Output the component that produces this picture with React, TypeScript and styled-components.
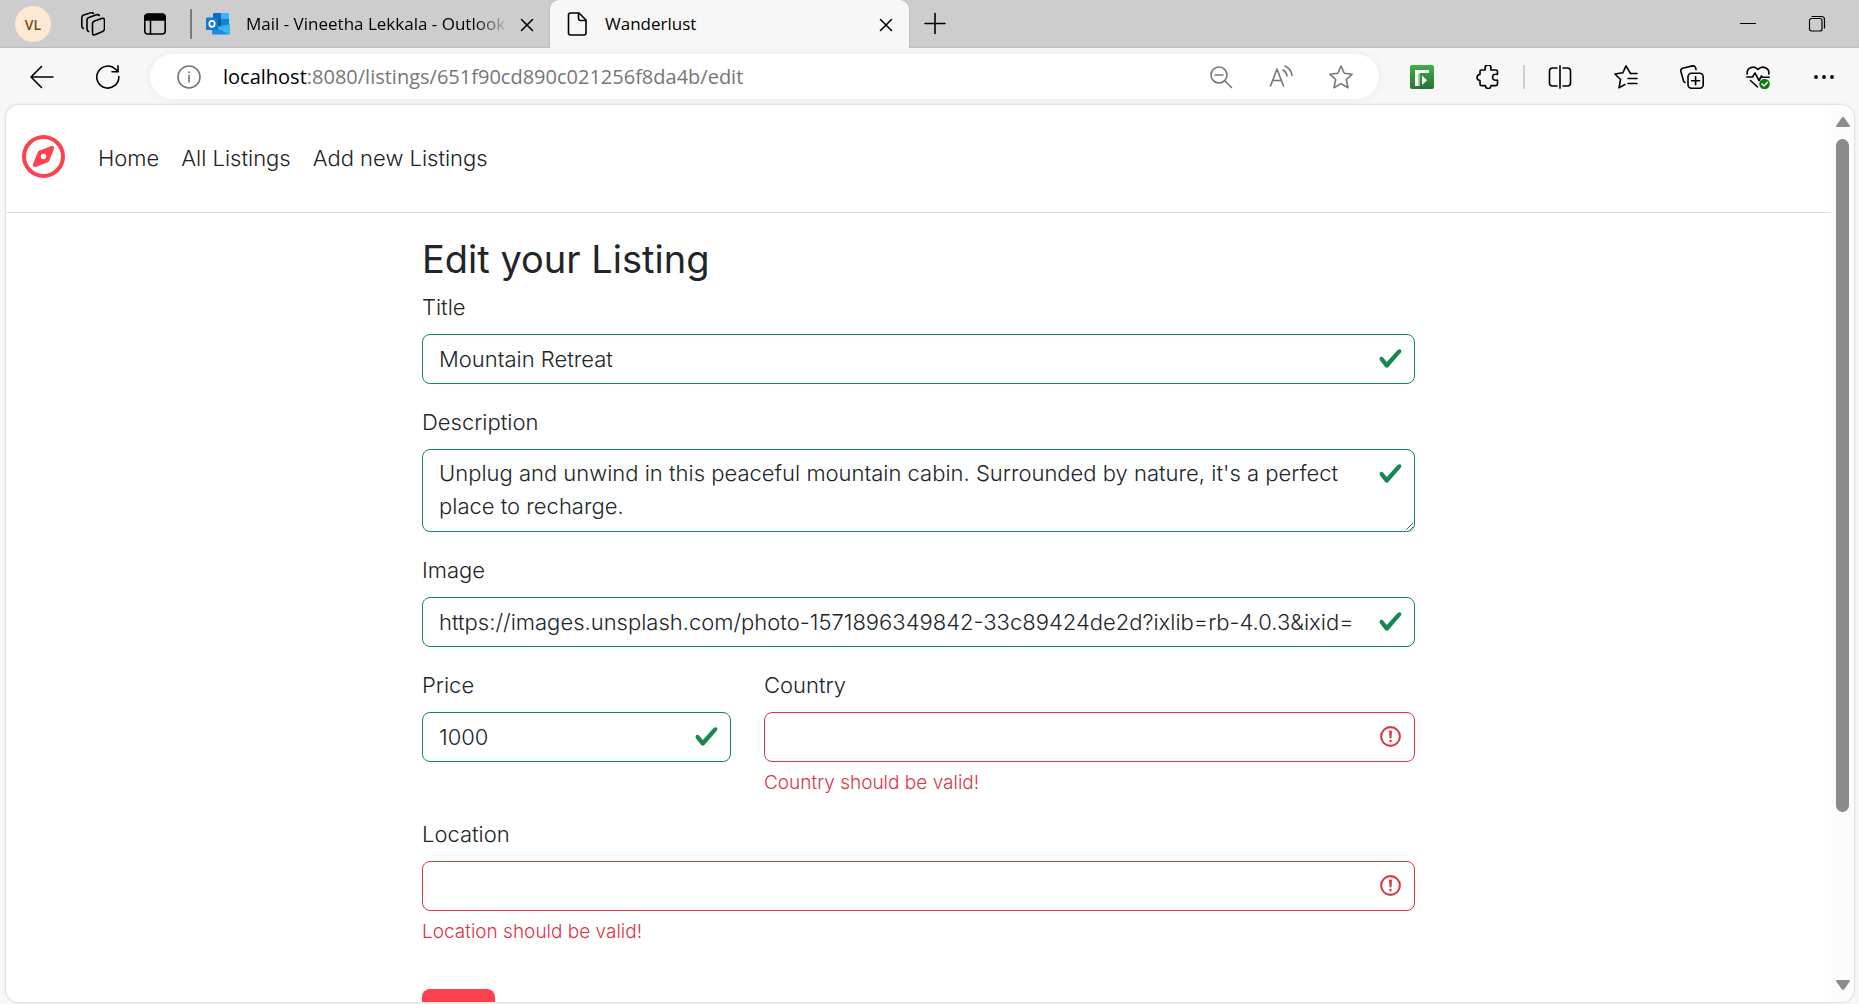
import React, { useState } from "react";
import styled, { createGlobalStyle, css } from "styled-components";
import { FaRegCompass } from "react-icons/fa6";

const GlobalStyle = createGlobalStyle`
  *, *::before, *::after { box-sizing: border-box; }
  body { margin: 0; background: #f7f7f7; }
  button, input, textarea { font: inherit; color: inherit; }
`;

const uiFont = `"Open Sans", "Noto Sans", sans-serif`;
const siteFont = `Inter, "Open Sans", sans-serif`;

/* ---------- browser frame ---------- */

const Window = styled.div`
  display: flex;
  flex-direction: column;
  height: 100vh;
  overflow: hidden;
  background: #f7f7f7;
  font-family: ${uiFont};
  color: #000;
`;

const TabStrip = styled.div`
  display: flex;
  flex: none;
  height: 48px;
  padding-right: 8px;
  background: #cdcdcd;
  box-shadow: inset 0 -1px 1px #bcbcbc;
`;

const IconButton = styled.button<{ $w?: number }>`
  display: flex;
  flex: none;
  align-items: center;
  justify-content: center;
  width: ${(p) => p.$w ?? 66}px;
  height: 100%;
  padding: 0;
  border: 0;
  background: none;
  color: inherit;
`;

const Avatar = styled.span`
  display: flex;
  align-items: center;
  justify-content: center;
  width: 36px;
  height: 36px;
  border-radius: 50%;
  background: #fde8d3;
  color: #7d4a12;
  font-size: 14px;
  font-weight: 600;
`;

const StripDivider = styled.span`
  align-self: center;
  width: 2px;
  height: 30px;
  background: #7c7c7c;
`;

const Tab = styled.div<{ $active?: boolean }>`
  position: relative;
  display: flex;
  align-items: center;
  width: ${(p) => (p.$active ? 359 : 358)}px;
  height: 48px;
  padding: 0 6px 0 ${(p) => (p.$active ? 15 : 14)}px;
  ${(p) =>
    p.$active &&
    css`
      border-radius: 9px 9px 0 0;
      background: #f7f7f7;
      box-shadow: 0 0 2px #a5a5a5;
      clip-path: inset(0 -2px 0 -2px);
    `}
`;

const TabTitle = styled.span<{ $fade?: boolean }>`
  flex: 1;
  min-width: 0;
  margin-left: 16px;
  overflow: hidden;
  white-space: nowrap;
  font-size: 17px;
  line-height: 24px;
  ${(p) =>
    p.$fade &&
    css`
      mask-image: linear-gradient(to right, #000 calc(100% - 36px), transparent);
    `}
`;

const Spacer = styled.span`
  flex: 1;
`;

const Toolbar = styled.div`
  display: flex;
  flex: none;
  align-items: center;
  height: 57px;
  padding: 0 2px 0 9px;
`;

const AddressBar = styled.div`
  display: flex;
  flex: 1;
  align-items: center;
  min-width: 0;
  height: 45px;
  margin: 0 10px 0 9px;
  padding: 0 8px 0 14px;
  border-radius: 23px;
  background: #fff;
  box-shadow: 0 0 6px #e6e6e6;
  color: #767676;
`;

const Url = styled.div`
  flex: 1;
  min-width: 0;
  margin-left: 9px;
  overflow: hidden;
  white-space: nowrap;
  font-size: 20px;
  line-height: 28px;

  b {
    font-weight: 400;
    color: #000;
  }
`;

const ToolDivider = styled.span`
  width: 2px;
  height: 24px;
  margin: 0 2px;
  background: #cfcfcf;
`;

const Svg = styled.svg`
  display: block;
  flex: none;
`;

const Icon = ({ children }: { children: React.ReactNode }) => (
  <Svg
    width={24}
    height={24}
    viewBox="0 0 24 24"
    fill="none"
    stroke="currentColor"
    strokeWidth={1.6}
    strokeLinecap="round"
    strokeLinejoin="round"
    aria-hidden
  >
    {children}
  </Svg>
);

const CloseIcon = () => (
  <Icon>
    <path d="M6.500 7.500l11 11M17.500 7.500l-11 11" />
  </Icon>
);

const OutlookLogo = () => (
  <Svg width={24} height={24} viewBox="0 0 24 24" aria-hidden>
    <rect x="7" y="1" width="16" height="15" rx="1.4" fill="#28a8ea" />
    <path d="M7 2.400A1.400 1.400 0 0 1 8.400 1H15v6H7z" fill="#0f6cbd" />
    <path d="M15 1h6.600A1.400 1.400 0 0 1 23 2.400V7h-8z" fill="#39b5f2" />
    <path d="M7 7h8v7H7z" fill="#0a5ea8" />
    <path d="M15 7h8v6h-8z" fill="#1180d8" />
    <path d="M6 12l9 6 9-6.500V21a1.500 1.500 0 0 1-1.500 1.500h-15A1.500 1.500 0 0 1 6 21z" fill="#1490df" />
    <path d="M24 11.500V21a1.500 1.500 0 0 1-1.500 1.500L13 16.800z" fill="#35b8f1" />
    <rect x="0" y="5.500" width="12" height="12.500" rx="1.200" fill="#0f78d4" />
    <ellipse cx="6" cy="11.800" rx="2.700" ry="3" fill="none" stroke="#fff" strokeWidth="1.800" />
  </Svg>
);

const ExtensionLogo = () => (
  <Svg width={24} height={24} viewBox="0 0 24 24" aria-hidden>
    <defs>
      <linearGradient id="ext" x1="0" y1="0" x2="0" y2="1">
        <stop offset="0" stopColor="#3fae49" />
        <stop offset="1" stopColor="#2a7237" />
      </linearGradient>
    </defs>
    <rect width="24" height="24" rx="2" fill="url(#ext)" />
    <path d="M5 5h14v3H9.500v13H5z" fill="#fff" />
    <path d="M8 9h1.500v12H8z" fill="#9ccfa2" />
    <path d="M12 10.500l5 4.800-5 4.800z" fill="#fff" />
  </Svg>
);

/* ---------- site ---------- */

const Viewport = styled.div`
  display: flex;
  flex: 1;
  min-height: 0;
  margin: 0 5px 2px 6px;
  overflow: hidden;
  border-radius: 13px;
  background: #fff;
  box-shadow: 0 0 2px 1px #dcdcdc;
`;

const Page = styled.div`
  flex: 1;
  min-width: 0;
  overflow: hidden;
  font-family: ${siteFont};
  font-size: 22px;
  font-weight: 300;
  line-height: 33px;
  color: #212529;
`;

const Nav = styled.nav`
  display: flex;
  align-items: center;
  height: 108px;
  padding: 0 16px 4px;
  border-bottom: 1px solid #dee2e6;
`;

const Brand = styled.a`
  display: flex;
  margin-right: 22px;
  color: #fe424d;
`;

const NavLink = styled.a`
  padding: 4px 11px 0;
  color: #222;
  text-decoration: none;
`;

const Main = styled.main`
  max-width: 993px;
  margin: 0 auto;
  padding-top: 23px;
`;

const Heading = styled.h1`
  margin: 0 0 9px;
  font-size: 38px;
  font-weight: 400;
  line-height: 46px;
`;

const Form = styled.form`
  display: flex;
  flex-direction: column;
  align-items: flex-start;
  gap: 22px;
`;

const Field = styled.div`
  width: 100%;
`;

const Row = styled.div`
  display: grid;
  grid-template-columns: repeat(3, 1fr);
  column-gap: 33px;
  width: 100%;
`;

const WideCell = styled.div`
  grid-column: span 2;
`;

const Label = styled.label`
  display: block;
  margin-bottom: 10px;
`;

const Control = styled.div`
  position: relative;
  display: flex;
`;

const boxed = css<{ $valid: boolean }>`
  display: block;
  width: 100%;
  padding: 7px 47px 7px 16px;
  border: 1px solid ${(p) => (p.$valid ? "#198754" : "#dc3545")};
  border-radius: 8px;
  outline: 0;
  background: #fff;
  line-height: 33px;
`;

const Input = styled.input<{ $valid: boolean }>`
  ${boxed}
  height: 50px;
`;

const TextArea = styled.textarea<{ $valid: boolean }>`
  ${boxed}
  height: 83px;
  overflow: hidden;
  resize: vertical;
`;

const Mark = styled(Svg)`
  position: absolute;
  top: 12px;
  right: 12px;
  pointer-events: none;
`;

const Feedback = styled.p`
  margin: 8px 0 0;
  font-size: 19px;
  line-height: 26px;
  color: #dc3545;
`;

const Submit = styled.button`
  min-width: 73px;
  height: 50px;
  margin-top: 22px;
  border: 0;
  border-radius: 8px;
  background: #fe424d;
`;

const ValidMark = () => (
  <Mark width={25} height={25} viewBox="0 0 8 8" aria-hidden>
    <path
      fill="#198754"
      d="M2.3 6.73.6 4.53c-.4-1.04.46-1.4 1.1-.8l1.1 1.4 3.4-3.8c.6-.63 1.6-.27 1.2.7l-4 4.6c-.43.5-.8.4-1.1.1z"
    />
  </Mark>
);

const InvalidMark = () => (
  <Mark width={25} height={25} viewBox="0 0 12 12" fill="none" stroke="#dc3545" aria-hidden>
    <circle cx="6" cy="6" r="4.5" />
    <path strokeLinejoin="round" d="M5.8 3.6h.4L6 6.5z" />
    <circle cx="6" cy="8.2" r=".6" fill="#dc3545" stroke="none" />
  </Mark>
);

type TextFieldProps = { id: string; label: string; initial: string; error?: string; multiline?: boolean };

const TextField = ({ id, label, initial, error, multiline }: TextFieldProps) => {
  const [value, setValue] = useState(initial);
  const valid = value.trim() !== "";
  return (
    <Field>
      <Label htmlFor={id}>{label}</Label>
      <Control>
        {multiline ? (
          <TextArea id={id} $valid={valid} value={value} onChange={(e) => setValue(e.target.value)} />
        ) : (
          <Input id={id} $valid={valid} value={value} onChange={(e) => setValue(e.target.value)} />
        )}
        {valid ? <ValidMark /> : <InvalidMark />}
      </Control>
      {!valid && error && <Feedback>{error}</Feedback>}
    </Field>
  );
};

const ScrollTrack = styled.div`
  display: flex;
  flex: none;
  flex-direction: column;
  align-items: center;
  width: 23px;
  padding: 12px 0;
  background: #fcfcfc;
  color: #8b8b8b;
`;

const ScrollRail = styled.div`
  display: grid;
  flex: 1;
  grid-template-rows: 13fr 3fr;
  margin: 12px 0 13px;
`;

const ScrollThumb = styled.div`
  width: 13px;
  border-radius: 7px;
  background: #8b8b8b;
`;

const ScrollArrow = ({ d }: { d: string }) => (
  <Svg width={14} height={10} viewBox="0 0 14 10" aria-hidden>
    <path fill="currentColor" d={d} />
  </Svg>
);

export default function App() {
  return (
    <>
      <GlobalStyle />
      <Window>
        <TabStrip>
          <IconButton aria-label="Profile"><Avatar>VL</Avatar></IconButton>
          <IconButton aria-label="Workspaces" $w={54}>
            <Icon>
              <path d="M13 9.200l7.500-2.800q3-.8 3 2v8.200q0 2-1.800 2.800l-7.200 3.200q-3 1-3-1.600V11.500q0-1.600 1.500-2.300z" />
              <path d="M7.500 19.500q-1.500-.8-1.500-2.500V8q0-1.800 1.800-2.600l7.700-2.600q2-.5 2.800.7" />
              <path d="M2.300 16.500Q.8 15.700.8 14V5.500q0-1.800 1.800-2.500L10 .8q1.800-.3 2.500.7" />
            </Icon>
          </IconButton>
          <IconButton aria-label="Tab actions" $w={70}>
            <Icon>
              <rect x="1.800" y="2.500" width="20.400" height="19.500" rx="3" />
              <path d="M7.500 8v14" />
              <path d="M2 8V5q0-3 3-3h14q3 0 3 3v3z" fill="currentColor" />
            </Icon>
          </IconButton>
          <StripDivider />
          <Tab>
            <OutlookLogo />
            <TabTitle $fade>Mail - Vineetha Lekkala - Outlook</TabTitle>
            <IconButton aria-label="Close Mail tab" $w={34}><CloseIcon /></IconButton>
          </Tab>
          <Tab $active>
            <Icon>
              <path d="M5.500 1h8.500l7 7v13q0 2-2 2H5.500q-2 0-2-2V3q0-2 2-2z" />
              <path d="M13.500 1v5.500q0 2 2 2H21" />
            </Icon>
            <TabTitle>Wanderlust</TabTitle>
            <IconButton aria-label="Close Wanderlust tab" $w={34}><CloseIcon /></IconButton>
          </Tab>
          <IconButton aria-label="New tab" $w={52}>
            <Icon><path d="M12 1.500v20M2 11.500h20" /></Icon>
          </IconButton>
          <Spacer />
          <IconButton aria-label="Minimize" $w={69}>
            <Icon><path d="M4.500 11.500h15" strokeWidth="1.200" /></Icon>
          </IconButton>
          <IconButton aria-label="Restore" $w={69}>
            <Icon>
              <rect x="4.500" y="6.500" width="12.500" height="12.500" rx="2" strokeWidth="1.200" />
              <path d="M7 4.500h9.500q3 0 3 3V16" strokeWidth="1.200" />
            </Icon>
          </IconButton>
        </TabStrip>

        <Toolbar>
          <IconButton aria-label="Back">
            <Icon><path d="M11.500 1.500L1 12l10.500 10.500M1 12h22" /></Icon>
          </IconButton>
          <IconButton aria-label="Refresh">
            <Icon>
              <path d="M22.800 11.500A11 11 0 1 1 19.500 4.200L22 6.500" />
              <path d="M22 .8v6h-6" />
            </Icon>
          </IconButton>
          <AddressBar>
            <IconButton aria-label="Site information" $w={50}>
              <Icon>
                <circle cx="12" cy="12" r="11" />
                <path d="M12 10.500v6.500" />
                <circle cx="12" cy="7.300" r="1" fill="currentColor" stroke="none" />
              </Icon>
            </IconButton>
            <Url><b>localhost</b>:8080/listings/651f90cd890c021256f8da4b/edit</Url>
            <IconButton aria-label="Zoom out" $w={60}>
              <Icon>
                <circle cx="10" cy="10" r="8" />
                <path d="M6 10h8M16 16l6.500 6.500" />
              </Icon>
            </IconButton>
            <IconButton aria-label="Read aloud" $w={60}>
              <Icon>
                <path d="M1.500 21L8 4l6.500 17M3.800 15.500h8.600M14 5q3.500 2 4 6M16 1q6 2.500 7 9.500" />
              </Icon>
            </IconButton>
            <IconButton aria-label="Add to favorites" $w={60}>
              <Icon>
                <path d="M12 1l3.200 7.300 8 .9-5.900 5.300 1.700 8.200-7-4.100-7 4.100 1.700-8.200L.8 9.200l8-.9z" />
              </Icon>
            </IconButton>
          </AddressBar>
          <IconButton aria-label="Extension"><ExtensionLogo /></IconButton>
          <IconButton aria-label="Extensions">
            <Icon>
              <path d="M5 5h4q.3-1.200 0-2a3 3 0 0 1 6 0q-.3.800 0 2h5q1.500 0 1.500 1.500V9.500q-1.200-.3-2-.2a3 3 0 0 0 0 6q.8.100 2-.2v4q0 1.500-1.500 1.500h-5q-.2 3-2.800 3t-2.800-3H5.500Q4 20.600 4 19.200V15.500Q1 15 1 12.400T4 9.500V6.500Q4 5 5 5z" />
            </Icon>
          </IconButton>
          <ToolDivider />
          <IconButton aria-label="Split screen">
            <Icon>
              <path d="M9 3H4.500q-3 0-3 3v12q0 3 3 3H9M15 3h4.500q3 0 3 3v12q0 3-3 3H15M12 .8v22.400" />
            </Icon>
          </IconButton>
          <IconButton aria-label="Favorites">
            <Icon>
              <path d="M23 8.500h-6.500L12 .9 8.800 7.800.9 9l5.600 5.500L5 22.800l6-3.300M14 13.500h9M14 18.500h9" />
            </Icon>
          </IconButton>
          <IconButton aria-label="Collections">
            <Icon>
              <rect x="8" y="8.300" width="15.200" height="15" rx="3.500" />
              <path d="M15.600 11.800v8M11.600 15.800h8" />
              <path d="M5 17.500q-1.200-.5-1.600-2L.9 6.500q-.5-2.400 1.600-3.200L12.500.9q2.300-.4 3 1.700l.5 2" />
            </Icon>
          </IconButton>
          <IconButton aria-label="Browser essentials">
            <Icon>
              <path d="M1.200 9C.3 3.500 7.500-.500 12 4.500 16.500-.500 23.700 3.500 22.800 9M.8 12h5.700l2.500-4 4 7.500 2.500-4.500 1 1.300h6.700M4.500 15.500l7 6.500" />
              <circle cx="18.500" cy="19" r="5.300" fill="#107c10" stroke="none" />
              <path d="M16 19l2 2 3.300-3.600" stroke="#fff" strokeWidth="1.500" />
            </Icon>
          </IconButton>
          <IconButton aria-label="Settings and more">
            <Icon>
              <g fill="currentColor" stroke="none">
                <circle cx="4" cy="12" r="1.900" />
                <circle cx="12" cy="12" r="1.900" />
                <circle cx="20" cy="12" r="1.900" />
              </g>
            </Icon>
          </IconButton>
        </Toolbar>

        <Viewport>
          <Page>
            <Nav>
              <Brand href="#" aria-label="Wanderlust"><FaRegCompass size={43} /></Brand>
              <NavLink href="#">Home</NavLink>
              <NavLink href="#">All Listings</NavLink>
              <NavLink href="#">Add new Listings</NavLink>
            </Nav>
            <Main>
              <Heading>Edit your Listing</Heading>
              <Form onSubmit={(e) => e.preventDefault()}>
                <TextField id="title" label="Title" initial="Mountain Retreat" />
                <TextField
                  id="description"
                  label="Description"
                  multiline
                  initial="Unplug and unwind in this peaceful mountain cabin. Surrounded by nature, it's a perfect place to recharge."
                />
                <TextField
                  id="image"
                  label="Image"
                  initial="https://images.unsplash.com/photo-1571896349842-33c89424de2d?ixlib=rb-4.0.3&ixid="
                />
                <Row>
                  <TextField id="price" label="Price" initial="1000" />
                  <WideCell>
                    <TextField id="country" label="Country" initial="" error="Country should be valid!" />
                  </WideCell>
                </Row>
                <TextField id="location" label="Location" initial="" error="Location should be valid!" />
                <Submit type="submit" aria-label="Edit" />
              </Form>
            </Main>
          </Page>
          <ScrollTrack>
            <ScrollArrow d="M7 0q.8 0 1.300.7L13.700 8.500q.7 1.500-.7 1.500H1q-1.400 0-.7-1.500L5.700.7Q6.200 0 7 0z" />
            <ScrollRail><ScrollThumb /></ScrollRail>
            <ScrollArrow d="M7 10q-.8 0-1.300-.7L.3 1.500Q-.4 0 1 0h12q1.400 0 .7 1.500L8.300 9.300Q7.800 10 7 10z" />
          </ScrollTrack>
        </Viewport>
      </Window>
    </>
  );
}
